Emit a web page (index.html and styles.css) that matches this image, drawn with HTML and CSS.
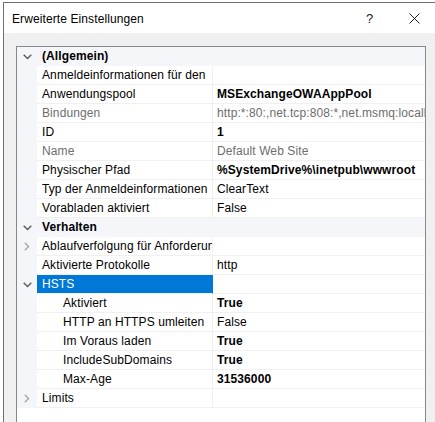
FILE: index.html
```html
<!DOCTYPE html>
<html>
<head>
<meta charset="utf-8">
<link rel="stylesheet" href="styles.css">
</head>
<body>
<div class="window">
  <div class="titlebar">
    <span class="title">Erweiterte Einstellungen</span>
    <span class="help">?</span>
    <span class="close"><svg width="11" height="11" viewBox="0 0 11 11"><path d="M0.5 0.5 L10.5 10.5 M10.5 0.5 L0.5 10.5" stroke="#1a1a1a" stroke-width="1" fill="none"/></svg></span>
  </div>
  <div class="client">
    <div class="grid">
      <div class="row cat"><span class="gut"><svg class="chev" width="9" height="6" viewBox="0 0 9 6"><path d="M0.7 0.8 L4.5 4.6 L8.3 0.8" stroke="#5a5a5a" stroke-width="1.4" fill="none"/></svg></span><span class="name">(Allgemein)</span><span class="val"></span></div>
      <div class="row"><span class="gut"></span><span class="name">Anmeldeinformationen für den</span><span class="val"></span></div>
      <div class="row"><span class="gut"></span><span class="name">Anwendungspool</span><span class="val b">MSExchangeOWAAppPool</span></div>
      <div class="row ro"><span class="gut"></span><span class="name">Bindungen</span><span class="val">http:*:80:,net.tcp:808:*,net.msmq:localhost,msmq.formatname:localhost</span></div>
      <div class="row"><span class="gut"></span><span class="name">ID</span><span class="val b">1</span></div>
      <div class="row ro"><span class="gut"></span><span class="name">Name</span><span class="val">Default Web Site</span></div>
      <div class="row"><span class="gut"></span><span class="name">Physischer Pfad</span><span class="val b">%SystemDrive%\inetpub\wwwroot</span></div>
      <div class="row"><span class="gut"></span><span class="name">Typ der Anmeldeinformationen</span><span class="val">ClearText</span></div>
      <div class="row"><span class="gut"></span><span class="name">Vorabladen aktiviert</span><span class="val">False</span></div>
      <div class="row cat"><span class="gut"><svg class="chev" width="9" height="6" viewBox="0 0 9 6"><path d="M0.7 0.8 L4.5 4.6 L8.3 0.8" stroke="#5a5a5a" stroke-width="1.4" fill="none"/></svg></span><span class="name">Verhalten</span><span class="val"></span></div>
      <div class="row"><span class="gut"><svg class="chev" width="6" height="9" viewBox="0 0 6 9"><path d="M0.8 0.7 L4.6 4.5 L0.8 8.3" stroke="#a6a6a6" stroke-width="1.4" fill="none"/></svg></span><span class="name">Ablaufverfolgung für Anforderungsfehler</span><span class="val"></span></div>
      <div class="row"><span class="gut"></span><span class="name">Aktivierte Protokolle</span><span class="val">http</span></div>
      <div class="row sel"><span class="gut"><svg class="chev" width="9" height="6" viewBox="0 0 9 6"><path d="M0.7 0.8 L4.5 4.6 L8.3 0.8" stroke="#5a5a5a" stroke-width="1.4" fill="none"/></svg></span><span class="name">HSTS</span><span class="val"></span></div>
      <div class="row sub"><span class="gut"></span><span class="name">Aktiviert</span><span class="val b">True</span></div>
      <div class="row sub"><span class="gut"></span><span class="name">HTTP an HTTPS umleiten</span><span class="val">False</span></div>
      <div class="row sub"><span class="gut"></span><span class="name">Im Voraus laden</span><span class="val b">True</span></div>
      <div class="row sub"><span class="gut"></span><span class="name">IncludeSubDomains</span><span class="val b">True</span></div>
      <div class="row sub"><span class="gut"></span><span class="name">Max-Age</span><span class="val b">31536000</span></div>
      <div class="row"><span class="gut"><svg class="chev" width="6" height="9" viewBox="0 0 6 9"><path d="M0.8 0.7 L4.6 4.5 L0.8 8.3" stroke="#a6a6a6" stroke-width="1.4" fill="none"/></svg></span><span class="name">Limits</span><span class="val"></span></div>
    </div>
  </div>
</div>
</body>
</html>
```
FILE: styles.css
```css
html, body {
  margin: 0;
  padding: 0;
  background: #ffffff;
  overflow: hidden;
}
body {
  width: 435px;
  height: 422px;
  font-family: "Liberation Sans", Arial, sans-serif;
  font-size: 12px;
  letter-spacing: 0.1px;
  color: #000;
}
.window {
  margin: 2px 0 0 3px;
  border-left: 1px solid #6f6f6f;
  border-top: 1px solid #6f6f6f;
  height: 419px;
  display: flex;
  flex-direction: column;
  background: #f0f0f0;
}
.titlebar {
  height: 30px;
  flex: none;
  background: #ffffff;
  display: flex;
  align-items: center;
  padding-left: 8px;
}
.title {
  flex: 1;
  color: #000;
  font-size: 12px;
  padding-top: 2px;
}
.help {
  width: 12px;
  font-size: 13px;
  margin-right: 31px;
  color: #1a1a1a;
  padding-top: 1px;
}
.close {
  width: 11px;
  height: 11px;
  margin-right: 15px;
  display: flex;
}
.client {
  flex: 1;
  padding: 13px 0 0 12px;
  display: flex;
}
.grid {
  width: 408px;
  border: 1px solid #828790;
  border-bottom: none;
  background: #ffffff;
  display: flex;
  flex-direction: column;
}
.row {
  display: grid;
  grid-template-columns: 20px 176px 1fr;
  height: 19px;
  line-height: 19px;
}
.row > span {
  white-space: nowrap;
  overflow: hidden;
}
.gut {
  background: #f5f6fa;
  display: flex;
  align-items: center;
  justify-content: center;
  height: 19px;
}
.name {
  padding-left: 5px;
  border-right: 1px solid #f0f0f0;
  border-bottom: 1px solid #f0f0f0;
}
.val {
  padding-left: 4px;
  border-bottom: 1px solid #f0f0f0;
}
.b {
  font-weight: bold;
}
.ro .name, .ro .val {
  color: #6d6d6d;
}
.cat .name, .cat .val {
  background: #f5f6fa;
  border-color: #f5f6fa;
}
.cat .name {
  font-weight: bold;
}
.sel .name {
  background: #0078d7;
  color: #ffffff;
  border-right-color: #0078d7;
}
.sub .name {
  padding-left: 26px;
}
.chev {
  display: block;
}
```
